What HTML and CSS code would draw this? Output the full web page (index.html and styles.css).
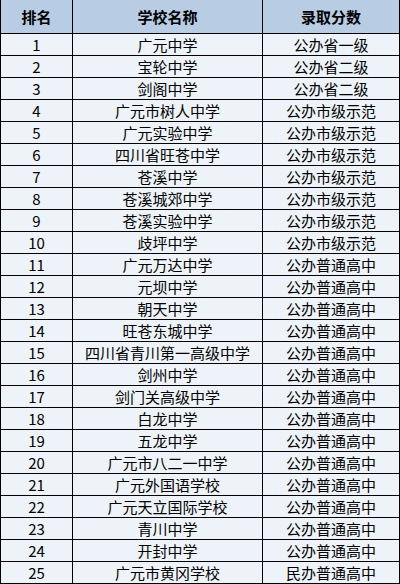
FILE: index.html
```html
<!DOCTYPE html>
<html lang="zh-CN">
<head>
<meta charset="utf-8">
<link rel="stylesheet" href="styles.css">
</head>
<body>
<div class="table">
  <div class="cell head">排名</div><div class="cell head">学校名称</div><div class="cell head">录取分数</div>
  <div class="cell">1</div><div class="cell">广元中学</div><div class="cell">公办省一级</div>
  <div class="cell">2</div><div class="cell">宝轮中学</div><div class="cell">公办省二级</div>
  <div class="cell">3</div><div class="cell">剑阁中学</div><div class="cell">公办省二级</div>
  <div class="cell">4</div><div class="cell">广元市树人中学</div><div class="cell">公办市级示范</div>
  <div class="cell">5</div><div class="cell">广元实验中学</div><div class="cell">公办市级示范</div>
  <div class="cell">6</div><div class="cell">四川省旺苍中学</div><div class="cell">公办市级示范</div>
  <div class="cell">7</div><div class="cell">苍溪中学</div><div class="cell">公办市级示范</div>
  <div class="cell">8</div><div class="cell">苍溪城郊中学</div><div class="cell">公办市级示范</div>
  <div class="cell">9</div><div class="cell">苍溪实验中学</div><div class="cell">公办市级示范</div>
  <div class="cell">10</div><div class="cell">歧坪中学</div><div class="cell">公办市级示范</div>
  <div class="cell">11</div><div class="cell">广元万达中学</div><div class="cell">公办普通高中</div>
  <div class="cell">12</div><div class="cell">元坝中学</div><div class="cell">公办普通高中</div>
  <div class="cell">13</div><div class="cell">朝天中学</div><div class="cell">公办普通高中</div>
  <div class="cell">14</div><div class="cell">旺苍东城中学</div><div class="cell">公办普通高中</div>
  <div class="cell">15</div><div class="cell">四川省青川第一高级中学</div><div class="cell">公办普通高中</div>
  <div class="cell">16</div><div class="cell">剑州中学</div><div class="cell">公办普通高中</div>
  <div class="cell">17</div><div class="cell">剑门关高级中学</div><div class="cell">公办普通高中</div>
  <div class="cell">18</div><div class="cell">白龙中学</div><div class="cell">公办普通高中</div>
  <div class="cell">19</div><div class="cell">五龙中学</div><div class="cell">公办普通高中</div>
  <div class="cell">20</div><div class="cell">广元市八二一中学</div><div class="cell">公办普通高中</div>
  <div class="cell">21</div><div class="cell">广元外国语学校</div><div class="cell">公办普通高中</div>
  <div class="cell">22</div><div class="cell">广元天立国际学校</div><div class="cell">公办普通高中</div>
  <div class="cell">23</div><div class="cell">青川中学</div><div class="cell">公办普通高中</div>
  <div class="cell">24</div><div class="cell">开封中学</div><div class="cell">公办普通高中</div>
  <div class="cell">25</div><div class="cell">广元市黄冈学校</div><div class="cell">民办普通高中</div>
</div>
</body>
</html>
```
FILE: styles.css
```css
html, body {
  margin: 0;
  padding: 0;
  background: #ffffff;
}
.table {
  width: 400px;
  height: 584px;
  box-sizing: border-box;
  display: grid;
  grid-template-columns: 71px 189px 136px;
  grid-template-rows: 33px;
  grid-auto-rows: 21px;
  gap: 1px;
  padding: 0 1px 1px 1px;
  background: #000000;
  font-family: "Noto Sans CJK SC", "Noto Sans", sans-serif;
  font-size: 15px;
  color: #000000;
}
.cell {
  background: #eef3f9;
  display: flex;
  align-items: center;
  justify-content: center;
  white-space: nowrap;
  line-height: 1;
}
.head {
  background: #b8cce4;
  font-weight: bold;
}
```
